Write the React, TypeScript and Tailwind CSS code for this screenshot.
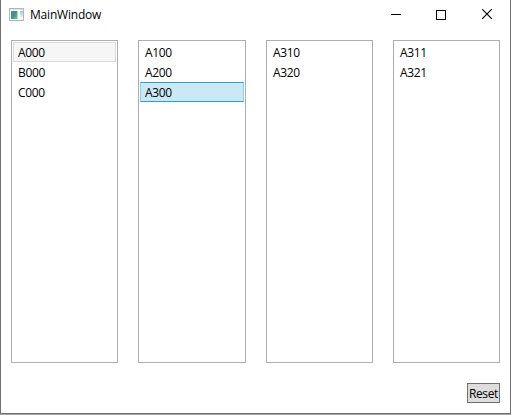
import React from 'react';

type Mark = 'none' | 'inactive' | 'active';

interface Column {
  width: string;
  items: string[];
  selected?: string;
  mark: Mark;
}

const columns: Column[] = [
  { width: 'w-[107px] mr-5', items: ['A000', 'B000', 'C000'], selected: 'A000', mark: 'inactive' },
  { width: 'w-[108px] mr-5', items: ['A100', 'A200', 'A300'], selected: 'A300', mark: 'active' },
  { width: 'w-[107px] mr-5', items: ['A310', 'A320'], mark: 'none' },
  { width: 'w-[107px]', items: ['A311', 'A321'], mark: 'none' },
];

const markClasses: Record<Mark, string> = {
  none: 'border-transparent',
  inactive: 'border-[#dadada] bg-[#f6f6f6]',
  active: 'border-y-[#26a0da] border-x-[#8fcdec] bg-[#cbe8f6]',
};

function ListBox({ column }: { column: Column }) {
  return (
    <ul className={`h-[323px] shrink-0 border border-[#abadb3] p-px ${column.width}`}>
      {column.items.map((item) => (
        <li
          key={item}
          className={`flex h-5 items-center border pt-0.5 pl-1 leading-4 tracking-[-0.35px] ${
            markClasses[item === column.selected ? column.mark : 'none']
          }`}
        >
          {item}
        </li>
      ))}
    </ul>
  );
}

function AppIcon() {
  return (
    <svg width="16" height="14" viewBox="0 0 16 14" shapeRendering="crispEdges">
      <defs>
        <linearGradient id="pane" x1="0" y1="0" x2="1" y2="1">
          <stop offset="0" stopColor="#5580a8" />
          <stop offset="0.5" stopColor="#438f90" />
          <stop offset="1" stopColor="#6fc088" />
        </linearGradient>
        <linearGradient id="side" x1="0" y1="0" x2="0" y2="1">
          <stop offset="0" stopColor="#a9c6dc" />
          <stop offset="1" stopColor="#e4efe8" />
        </linearGradient>
      </defs>
      <rect x="0.5" y="0.5" width="14" height="12" fill="#f6f7f9" stroke="#b2b5ba" />
      <rect x="1" y="1" width="13" height="1" fill="#dfe2e7" />
      <rect x="2" y="3" width="6" height="8" fill="url(#pane)" />
      <rect x="8" y="3" width="1" height="8" fill="#b4d8cc" />
      <rect x="11" y="3" width="3" height="6" fill="url(#side)" />
    </svg>
  );
}

function TitleBar() {
  return (
    <header className="flex h-[29px] shrink-0 items-center pl-2">
      <AppIcon />
      <h1 className="ml-[5px] pt-px leading-4 tracking-[-0.2px]">MainWindow</h1>
      <div className="mr-[17px] ml-auto flex items-center">
        <svg width="10" height="11" className="mr-[35px] block" shapeRendering="crispEdges">
          <path d="M0 5.5H10" stroke="black" />
        </svg>
        <svg width="10" height="10" className="mr-9 block" shapeRendering="crispEdges">
          <rect x="0.5" y="0.5" width="9" height="9" fill="none" stroke="black" />
        </svg>
        <svg width="11" height="11" className="block">
          <path d="M0.2 0.2L9.8 9.8M9.8 0.2L0.2 9.8" stroke="black" strokeWidth="1.15" />
        </svg>
      </div>
    </header>
  );
}

export default function App() {
  return (
    <div className="h-[415px] w-[511px] bg-[#a5a5a5] pb-px font-['Open_Sans','Noto_Sans',sans-serif] text-[12px] text-black">
      <div className="flex h-[414px] flex-col border border-t-0 border-[#707070] bg-white">
        <TitleBar />
        <main className="flex flex-1 flex-col px-2.5 pt-[11px]">
          <div className="flex">
            {columns.map((column) => (
              <ListBox key={column.items[0]} column={column} />
            ))}
          </div>
          <button className="mt-5 h-5 w-[33px] self-end border border-[#707070] bg-[#dddddd] text-center leading-[20px] tracking-[-0.35px] whitespace-nowrap">
            Reset
          </button>
        </main>
      </div>
    </div>
  );
}
